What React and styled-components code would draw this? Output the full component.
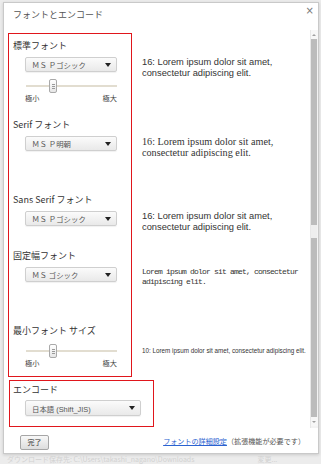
import React from "react";
import styled, { createGlobalStyle } from "styled-components";

const Global = createGlobalStyle`
  html, body { margin: 0; padding: 0; }
  body {
    background: #ececec;
    font-family: "Noto Sans CJK JP", "Liberation Sans", sans-serif;
    width: 321px;
    height: 464px;
    overflow: hidden;
  }
`;

const Page = styled.div`
  display: flex;
  flex-direction: column;
  padding: 2px 0 0 3px;
  height: 462px;
  overflow: hidden;
`;

const Dialog = styled.div`
  width: 314px;
  height: 451px;
  background: #fff;
  border: 1px solid #c9c9c9;
  box-shadow: 0 1px 3px rgba(0, 0, 0, 0.15);
  display: flex;
  flex-direction: column;
`;

const Header = styled.div`
  height: 27px;
  display: flex;
  justify-content: space-between;
  align-items: flex-start;
  padding: 0 4px 0 9px;
`;

const Title = styled.div`
  margin-top: 6px;
  font-size: 9px;
  line-height: 12px;
  color: #555;
`;

const Close = styled.div`
  margin-top: 3px;
  font-family: "DejaVu Sans", sans-serif;
  font-size: 10px;
  line-height: 10px;
  color: #777;
`;

const Body = styled.div`
  display: flex;
  height: 398px;
`;

const Content = styled.div`
  flex: 1;
  padding: 3px 0 0 4px;
  display: flex;
  flex-direction: column;
`;

const Section = styled.div`
  display: flex;
  align-items: stretch;
`;

const LeftCell = styled.div`
  width: 118px;
  border-left: 1px solid #e0161c;
  border-right: 1px solid #e0161c;
  border-top: ${(p) => (p.first ? "1px solid #e0161c" : "none")};
  border-bottom: ${(p) => (p.last ? "1px solid #e0161c" : "none")};
  padding: ${(p) => (p.first ? 5 : 0)}px 0 ${(p) => p.pb}px 4px;
`;

const Label = styled.div`
  font-size: 9px;
  line-height: 14px;
  height: 14px;
  color: #333;
  white-space: nowrap;
`;

const SelectBox = styled.div`
  margin: ${(p) => p.mt ?? 4}px 0 0 12px;
  width: ${(p) => p.w}px;
  height: ${(p) => p.h ?? 15}px;
  box-sizing: border-box;
  border: 1px solid #cfcfcf;
  border-radius: 2px;
  background: linear-gradient(#fbfbfb, #e9e9e9);
  box-shadow: 0 1px 1px rgba(0, 0, 0, 0.06);
  display: flex;
  align-items: center;
  justify-content: space-between;
  padding: 0 5px 0 6px;
`;

const SelectText = styled.span`
  font-size: 7.4px;
  color: #555;
  white-space: nowrap;
  font-family: "Liberation Sans", "Noto Sans CJK JP", sans-serif;
`;

const Arrow = styled.span`
  width: 0;
  height: 0;
  border-left: 3px solid transparent;
  border-right: 3px solid transparent;
  border-top: 4px solid #222;
`;

const SliderRow = styled.div`
  margin: ${(p) => p.mt}px 0 0 13px;
  width: 91px;
  height: 14px;
  display: flex;
  align-items: center;
  background: linear-gradient(
    to bottom,
    transparent 6px,
    #e2ddd0 6px,
    #e2ddd0 8px,
    transparent 8px
  );
`;

const Thumb = styled.div`
  margin-left: ${(p) => p.at}px;
  width: 8px;
  height: 14px;
  box-sizing: border-box;
  border: 1px solid #a9a9a9;
  border-radius: 2px;
  background: linear-gradient(#ffffff, #e6e6e6);
  display: flex;
  align-items: center;
  justify-content: center;
`;

const Grip = styled.div`
  width: 3px;
  height: 5px;
  background: repeating-linear-gradient(
    to bottom,
    #9a9a9a 0,
    #9a9a9a 1px,
    transparent 1px,
    transparent 2px
  );
`;

const Scale = styled.div`
  margin-left: 12px;
  width: 92px;
  display: flex;
  justify-content: space-between;
  font-size: 7.2px;
  line-height: 10px;
  height: 10px;
  color: #444;
`;

const SampleCell = styled.div`
  flex: 1;
  padding: ${(p) => p.pt}px 4px 0 10px;
`;

const Sample = styled.div`
  font-family: ${(p) => p.family};
  font-size: ${(p) => p.size}px;
  line-height: ${(p) => p.lh}px;
  letter-spacing: ${(p) => p.ls ?? 0}px;
  color: #333;
  white-space: ${(p) => (p.nowrap ? "nowrap" : "normal")};
`;

const EncodeBox = styled.div`
  margin: 3px 0 0 1px;
  width: 140px;
  border: 1px solid #e0161c;
  padding: 2px 0 10px 3px;
`;

const Scrollbar = styled.div`
  width: 8px;
  border-left: 1px solid #e8e8e8;
  background: #f3f3f3;
  display: flex;
  flex-direction: column;
  align-items: center;
`;

const ScrollArrow = styled.div`
  height: 9px;
  width: 100%;
  display: flex;
  align-items: center;
  justify-content: center;
  background: #f7f7f7;
  &::after {
    content: "";
    border-left: 2px solid transparent;
    border-right: 2px solid transparent;
    ${(p) => (p.down ? "border-top" : "border-bottom")}: 2px solid #a0a0a0;
  }
`;

const ThumbBar = styled.div`
  width: 6px;
  height: ${(p) => p.h}px;
  background: #bcbcbc;
`;

const TrackGap = styled.div`
  width: 6px;
  height: ${(p) => p.h}px;
  background: #eeeeee;
`;

const Footer = styled.div`
  display: flex;
  align-items: flex-start;
  padding: 7px 13px 0 16px;
`;

const Button = styled.div`
  width: 29px;
  height: 15px;
  box-sizing: border-box;
  border: 1px solid #a6a6a6;
  border-radius: 2px;
  background: linear-gradient(#f8f8f8, #dddddd);
  font-size: 7px;
  line-height: 13px;
  text-align: center;
  color: #333;
`;

const FooterText = styled.div`
  margin-left: auto;
  margin-top: 1px;
  font-size: 7.1px;
  line-height: 10px;
  color: #555;
  white-space: nowrap;
`;

const Link = styled.span`
  color: #2a62d0;
  text-decoration: underline;
`;

const Behind = styled.div`
  margin: 1px 0 0 4px;
  font-size: 7px;
  line-height: 9px;
  color: #d2d2d2;
  white-space: nowrap;
`;

const sans = `"Liberation Sans", "Noto Sans CJK JP", sans-serif`;
const serif = `"Liberation Serif", "Noto Sans CJK JP", serif`;
const mono = `"Liberation Mono", "Noto Sans CJK JP", monospace`;

const LOREM = "Lorem ipsum dolor sit amet, consectetur adipiscing elit.";

export default function App() {
  return (
    <>
      <Global />
      <Page>
        <Dialog>
          <Header>
            <Title>フォントとエンコード</Title>
            <Close>×</Close>
          </Header>
          <Body>
            <Content>
              <Section>
                <LeftCell first pb={15}>
                  <Label>標準フォント</Label>
                  <SelectBox w={92}>
                    <SelectText>ＭＳ Ｐゴシック</SelectText>
                    <Arrow />
                  </SelectBox>
                  <SliderRow mt={7}>
                    <Thumb at={23}>
                      <Grip />
                    </Thumb>
                  </SliderRow>
                  <Scale>
                    <span>極小</span>
                    <span>極大</span>
                  </Scale>
                </LeftCell>
                <SampleCell pt={24}>
                  <Sample family={sans} size={9.3} lh={11}>
                    16: {LOREM}
                  </Sample>
                </SampleCell>
              </Section>

              <Section>
                <LeftCell pb={42}>
                  <Label>Serif フォント</Label>
                  <SelectBox w={92}>
                    <SelectText>ＭＳ Ｐ明朝</SelectText>
                    <Arrow />
                  </SelectBox>
                </LeftCell>
                <SampleCell pt={18}>
                  <Sample family={serif} size={10.2} lh={11}>
                    16: {LOREM}
                  </Sample>
                </SampleCell>
              </Section>

              <Section>
                <LeftCell pb={23}>
                  <Label>Sans Serif フォント</Label>
                  <SelectBox w={92}>
                    <SelectText>ＭＳ Ｐゴシック</SelectText>
                    <Arrow />
                  </SelectBox>
                </LeftCell>
                <SampleCell pt={18}>
                  <Sample family={sans} size={9.3} lh={11}>
                    16: {LOREM}
                  </Sample>
                </SampleCell>
              </Section>

              <Section>
                <LeftCell pb={42}>
                  <Label>固定幅フォント</Label>
                  <SelectBox w={92}>
                    <SelectText>ＭＳ ゴシック</SelectText>
                    <Arrow />
                  </SelectBox>
                </LeftCell>
                <SampleCell pt={18}>
                  <Sample family={mono} size={8} lh={10} ls={-0.8}>
                    {LOREM}
                  </Sample>
                </SampleCell>
              </Section>

              <Section>
                <LeftCell last pb={8}>
                  <Label>最小フォント サイズ</Label>
                  <SliderRow mt={6}>
                    <Thumb at={23}>
                      <Grip />
                    </Thumb>
                  </SliderRow>
                  <Scale>
                    <span>極小</span>
                    <span>極大</span>
                  </Scale>
                </LeftCell>
                <SampleCell pt={23}>
                  <Sample family={sans} size={6.3} lh={8} nowrap>
                    10: {LOREM}
                  </Sample>
                </SampleCell>
              </Section>

              <EncodeBox>
                <Label>エンコード</Label>
                <SelectBox w={116} h={16} mt={3}>
                  <SelectText>日本語 (Shift_JIS)</SelectText>
                  <Arrow />
                </SelectBox>
              </EncodeBox>
            </Content>
            <Scrollbar>
              <ScrollArrow />
              <ThumbBar h={186} />
              <TrackGap h={13} />
              <ThumbBar h={179} />
              <ScrollArrow down />
            </Scrollbar>
          </Body>
          <Footer>
            <Button>完了</Button>
            <FooterText>
              <Link>フォントの詳細設定</Link>（拡張機能が必要です）
            </FooterText>
          </Footer>
        </Dialog>
        <Behind>ダウンロード保存先: C:\Users\takashi_nagano\Downloads　　　　　　　　　変更...</Behind>
      </Page>
    </>
  );
}
